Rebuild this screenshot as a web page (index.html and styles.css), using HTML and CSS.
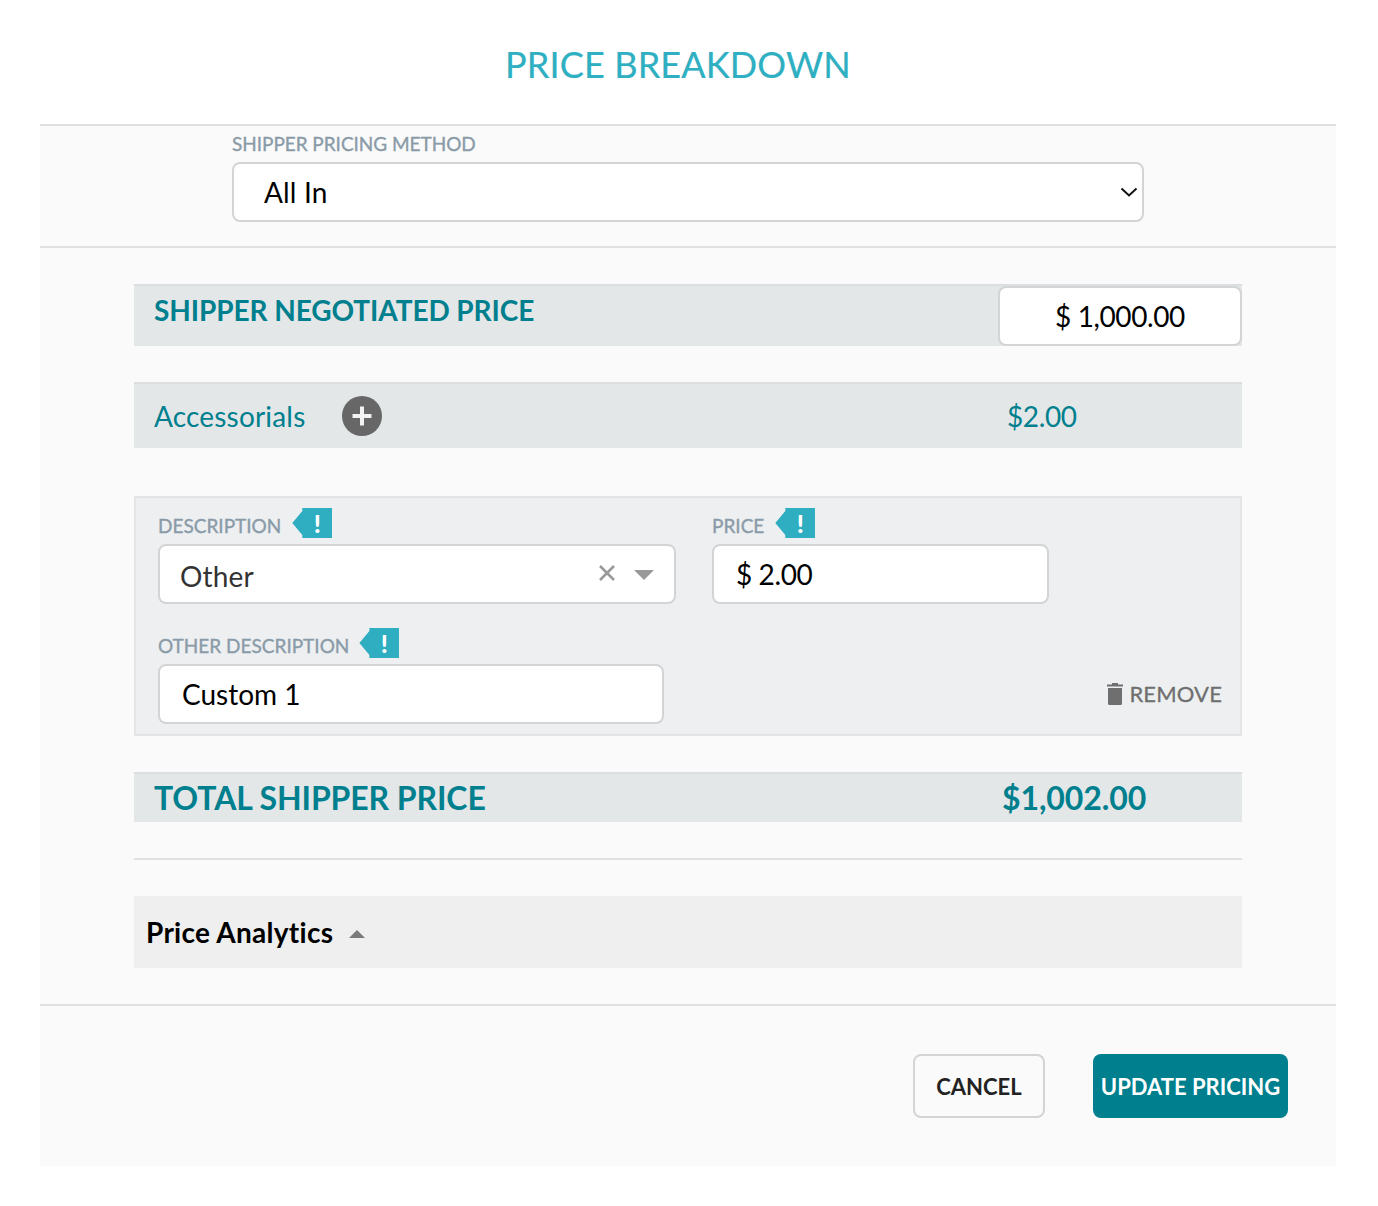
FILE: index.html
```html
<!DOCTYPE html>
<html lang="en">
<head>
<meta charset="utf-8">
<title>Price Breakdown</title>
<link rel="stylesheet" href="styles.css">
</head>
<body>
<div class="modal">
  <h1 class="title">PRICE BREAKDOWN</h1>
  <div class="panel">
    <section class="method">
      <div class="method-inner">
        <div class="label">SHIPPER PRICING METHOD</div>
        <div class="field select-field">
          <span class="val">All In</span>
          <svg class="chev" width="18" height="10" viewBox="0 0 18 10"><path d="M1.500 1.500 9 8.500 16.500 1.500" fill="none" stroke="#111" stroke-width="2"/></svg>
        </div>
      </div>
    </section>
    <section class="content">
      <div class="bar negotiated">
        <span class="neg-title">SHIPPER NEGOTIATED PRICE</span>
        <div class="field neg-input num">$ 1,000.00</div>
      </div>
      <div class="bar accessorials">
        <span class="acc-title">Accessorials</span>
        <svg class="plus" width="40" height="40" viewBox="0 0 40 40"><circle cx="20" cy="20" r="20" fill="#676767"/><path d="M20 10.500v19M10.500 20h19" stroke="#f2f2f2" stroke-width="4"/></svg>
        <span class="acc-value num">$2.00</span>
      </div>
      <div class="acc-box">
        <div class="acc-col-left">
          <div class="label-row"><span class="label">DESCRIPTION</span>
            <span class="flag"><span class="flag-mark">!</span></span></div>
          <div class="field desc-field">
            <span class="desc-text val">Other</span>
            <svg class="clear" width="18" height="18" viewBox="0 0 18 18"><path d="M2 2 16 16M16 2 2 16" stroke="#999" stroke-width="2.600"/></svg>
            <svg class="caret" width="20" height="10" viewBox="0 0 20 10"><path d="M0 0h20L10 10z" fill="#999"/></svg>
          </div>
          <div class="label-row second"><span class="label">OTHER DESCRIPTION</span>
            <span class="flag"><span class="flag-mark">!</span></span></div>
          <div class="field other-field">Custom 1</div>
        </div>
        <div class="acc-col-right">
          <div class="label-row"><span class="label">PRICE</span>
            <span class="flag"><span class="flag-mark">!</span></span></div>
          <div class="field price-field num">$ 2.00</div>
          <div class="remove">
            <svg width="16" height="22" viewBox="0 0 16 22"><path d="M5 1.500V0h6v1.500h5V3.500H0V1.500zM1 5h14v15.500a1.500 1.500 0 0 1-1.500 1.500h-11A1.500 1.500 0 0 1 1 20.500z" fill="#6f6f6f"/></svg>
            <span class="remove-text">REMOVE</span>
          </div>
        </div>
      </div>
      <div class="bar total">
        <span class="total-title">TOTAL SHIPPER PRICE</span>
        <span class="total-value">$1,002.00</span>
      </div>
      <hr class="rule">
      <div class="analytics">
        <span class="an-title">Price Analytics</span>
        <svg class="an-caret" width="16" height="8" viewBox="0 0 16 8"><path d="M8 0l8 8H0z" fill="#7a7a7a"/></svg>
      </div>
    </section>
    <footer class="actions">
      <button class="btn cancel">CANCEL</button>
      <button class="btn update">UPDATE PRICING</button>
    </footer>
  </div>
</div>
</body>
</html>
```
FILE: styles.css
```css
* { box-sizing: border-box; }
html, body { margin: 0; background: #fff; }
body { font-family: Lato, "Open Sans", sans-serif; color: #000; height: 1206px; }
.modal { padding: 0 42px 0 40px; }
.title {
  margin: 0; height: 124px; padding: 39px 20px 0 0; text-align: center;
  font-size: 36px; line-height: 50px; font-weight: 400; color: #2fafc2;
  letter-spacing: 0.15px; -webkit-text-stroke: 0.2px #2fafc2;
}
.panel { background: #fafafa; height: 1042px; }
.method { border-top: 2px solid #e0e0e0; border-bottom: 2px solid #e0e0e0; height: 124px; padding: 6px 192px 0; }
.method-inner { display: flex; flex-direction: column; }
.label { font-size: 19px; line-height: 24px; color: #8a9ba8; font-weight: 400; -webkit-text-stroke: 0.35px #8a9ba8; }
.field {
  background: #fff; border: 2px solid #d2d4d6; border-radius: 8px;
  font-size: 28px; height: 60px; display: flex; align-items: center; color: #000;
}
.val { letter-spacing: 0.15px; }
.num { letter-spacing: -0.4px; }
.method .label { margin-bottom: 6px; letter-spacing: -0.04px; }
.select-field { padding: 0 4px 0 30px; justify-content: space-between; }
.content { padding: 36px 94px 0; height: 758px; border-bottom: 2px solid #e0e0e0; }
.bar { background: #e3e7e8; border-top: 2px solid #dcdedf; display: flex; align-items: center; color: #007f8e; }
.negotiated { height: 62px; padding-left: 20px; justify-content: space-between; }
.neg-title { font-size: 28px; font-weight: 700; margin-top: -12px; letter-spacing: -0.08px; }
.neg-input { width: 244px; justify-content: center; }
.accessorials { height: 66px; margin-top: 36px; padding-left: 20px; font-size: 28px; }
.acc-title { width: 188px; letter-spacing: 0.18px; }
.acc-value { margin-left: 625px; }
.acc-box {
  margin-top: 48px; height: 240px; background: #edeff1; border: 2px solid #e2e4e6;
  display: flex; padding: 10px 18px 0 22px;
}
.acc-col-left { width: 554px; }
.acc-col-right { flex: 1; display: flex; flex-direction: column; }
.label-row { display: flex; align-items: center; height: 36px; gap: 11px; }
.second { margin-top: 24px; gap: 10px; }
.flag {
  display: flex; justify-content: center; align-items: center; width: 40px; height: 30px; margin-top: -6px;
  background: #2fadc1; color: #fff; font-size: 25px; font-weight: 900; padding-left: 10px;
  clip-path: polygon(0 50%, 10px 3px, 10px 0, 100% 0, 100% 100%, 10px 100%, 10px 27px);
}
.flag-mark { line-height: 30px; }
.desc-field { width: 518px; padding: 4px 20px 0; color: #333; }
.desc-text { flex: 1; }
.clear { margin-right: 18px; margin-top: -6px; }
.caret { margin-top: -2px; }
.other-field { width: 506px; padding: 0 22px; }
.price-field { width: 337px; padding: 0 22px; }
.remove {
  margin-top: 76px; align-self: flex-end; display: flex; align-items: center; gap: 6px;
  font-size: 22px; color: #6f6f6f;
}
.remove-text { -webkit-text-stroke: 0.3px #6f6f6f; letter-spacing: 0.15px; }
.total { height: 50px; margin-top: 36px; padding-left: 20px; font-size: 32px; font-weight: 700; }
.total-title { width: 848px; letter-spacing: -0.1px; margin-top: -2px; }
.total-value { letter-spacing: -0.1px; margin-top: -2px; }
.rule { margin: 36px 0 0; border: 0; border-top: 2px solid #e0e0e0; }
.analytics {
  margin-top: 36px; height: 72px; background: #efefef; display: flex; align-items: center;
  padding-left: 12px; gap: 16px;
}
.an-title { font-size: 28px; font-weight: 700; letter-spacing: 0.27px; }
.an-caret { margin-top: 4px; }
.actions { display: flex; justify-content: flex-end; gap: 48px; padding: 48px 48px 0 0; }
.btn { height: 64px; font-family: inherit; font-size: 22px; font-weight: 700; border-radius: 8px; padding: 0; }
.cancel { width: 132px; background: #fafafa; border: 2px solid #d4d4d4; color: #222; }
.update { width: 195px; background: #007f8e; border: 0; color: #fff; }
```
